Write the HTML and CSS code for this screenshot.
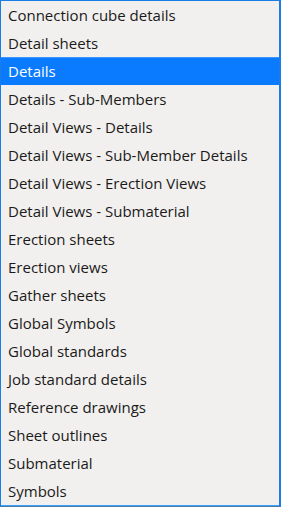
FILE: index.html
```html
<!DOCTYPE html>
<html lang="en">
<head>
    <meta charset="UTF-8" />
    <title>Detail list</title>
    <link rel="stylesheet" href="styles.css">
</head>
<body>
<ul class="list">
    <li>Connection cube details</li>
    <li>Detail sheets</li>
    <li class="sel">Details</li>
    <li>Details - Sub-Members</li>
    <li>Detail Views - Details</li>
    <li>Detail Views - Sub-Member Details</li>
    <li>Detail Views - Erection Views</li>
    <li>Detail Views - Submaterial</li>
    <li>Erection sheets</li>
    <li>Erection views</li>
    <li>Gather sheets</li>
    <li>Global Symbols</li>
    <li>Global standards</li>
    <li>Job standard details</li>
    <li>Reference drawings</li>
    <li>Sheet outlines</li>
    <li>Submaterial</li>
    <li>Symbols</li>
</ul>
</body>
</html>
```

FILE: styles.css
```css
*{ box-sizing:border-box; }
body{ margin:0; background:#f2f0ee; }
.list{
    list-style:none; margin:0; padding:0;
    width:281px; height:507px;
    border:1px solid #1a7de6; border-right-width:2px; border-bottom:1px solid #4d7aa5;
    box-shadow:inset 0 -1px #3aa2ff;
    background:#f2f0ee;
    font-family:"Open Sans", sans-serif; font-size:15px; color:#1a1a1a;
}
.list li{ height:28px; line-height:28px; padding-left:7px; white-space:nowrap; }
.list li.sel{ background:#0a7bff; color:#fff; border-top:1px solid #3b95ff; line-height:26px; }
```
